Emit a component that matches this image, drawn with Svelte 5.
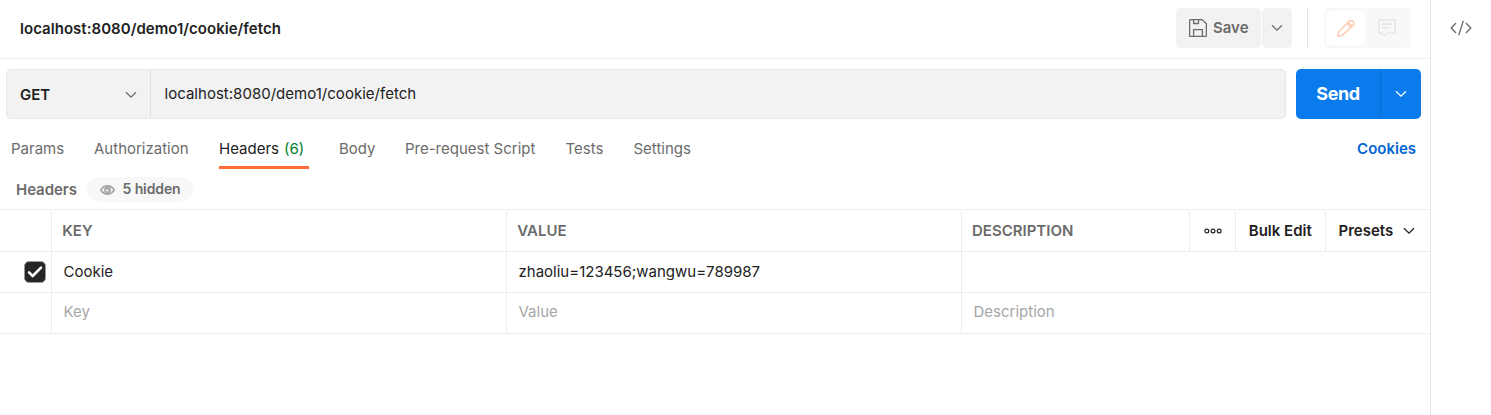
<script>
  const tabs = ['Params', 'Authorization', 'Headers', 'Body', 'Pre-request Script', 'Tests', 'Settings'];
  const count = 6;
  const active = 'Headers';
</script>

{#snippet chevron()}
  <svg class="chevron" width="12" height="8" viewBox="0 0 12 8"><path d="M1 1.2 6 6.2 11 1.2" /></svg>
{/snippet}

<div class="app">
  <main>
    <header>
      <h1>localhost:8080/demo1/cookie/fetch</h1>
      <div class="save">
        <button class="save-main">
          <svg width="18" height="18" viewBox="0 0 18 18" class="line">
            <path d="M1.6.6H13.2L17.4 4.8V16.4a1 1 0 0 1-1 1H1.6a1 1 0 0 1-1-1V1.6a1 1 0 0 1 1-1Z" />
            <path d="M4.6.8V4.5H9.5V.8M4.6 17.2V10.6H13.4V17.2" />
          </svg>
          <span>Save</span>
        </button>
        <button class="save-more">{@render chevron()}</button>
      </div>
      <i class="separator"></i>
      <div class="modes">
        <span class="mode on">
          <svg width="18" height="18" viewBox="0 0 18 18" class="line">
            <path d="M.8 17.2 1.6 13 12.4 2.1a2.9 2.9 0 0 1 4 4L5.2 16.400Z" />
            <path d="M11.200 3.300 14.900 7M10.800 3.700a3.400 3.400 0 0 0 3.700 3.700" />
          </svg>
        </span>
        <span class="mode">
          <svg width="18" height="18" viewBox="0 0 18 18" class="line">
            <path d="M.8 1H17.2V14.2H9.3L6.7 16.8 4.1 14.2H.8ZM4 5.1H14M4 8.7H11" />
          </svg>
        </span>
      </div>
    </header>

    <section class="request">
      <div class="url-box">
        <div class="method"><span>GET</span>{@render chevron()}</div>
        <div class="url">localhost:8080/demo1/cookie/fetch</div>
      </div>
      <div class="send">
        <button class="send-main">Send</button>
        <button class="send-more">{@render chevron()}</button>
      </div>
    </section>

    <nav>
      {#each tabs as tab}
        <div class="tab" class:active={tab === active}>
          <span class="label">{tab}{#if tab === active}<em>({count})</em>{/if}</span>
        </div>
      {/each}
      <a class="cookies">Cookies</a>
    </nav>

    <div class="subhead">
      <span class="subtitle">Headers</span>
      <span class="pill">
        <svg width="15" height="10" viewBox="0 0 15 10">
          <path d="M.8 5C2.5 2.1 4.8.9 7.5.9S12.5 2.1 14.2 5C12.5 7.9 10.2 9.1 7.5 9.1S2.5 7.9.8 5Z" fill="none" stroke="#a6a6a6" stroke-width="1.6" />
          <circle cx="7.5" cy="5" r="2.5" fill="none" stroke="#a6a6a6" stroke-width="1.8" />
          <path d="M7.5 3V5H9.5" fill="none" stroke="#a6a6a6" />
        </svg>
        <b>5 hidden</b>
      </span>
    </div>

    <div class="table">
      <div class="row head">
        <div></div>
        <div class="cell">KEY</div>
        <div class="cell">VALUE</div>
        <div class="cell desc-head">
          <span class="desc">DESCRIPTION</span>
          <span class="tool dots">
            <svg width="18" height="6" viewBox="0 0 18 6"><circle cx="2.8" cy="3" r="1.9" /><circle cx="9" cy="3" r="1.9" /><circle cx="15.2" cy="3" r="1.9" /></svg>
          </span>
          <span class="tool bulk">Bulk Edit</span>
          <span class="tool presets"><span>Presets</span>{@render chevron()}</span>
        </div>
      </div>
      <div class="row">
        <div class="check">
          <span class="box"><svg width="20" height="20" viewBox="0 0 20 20"><path d="M4 10.3 7.7 14 16 5.7" /></svg></span>
        </div>
        <div class="cell">Cookie</div>
        <div class="cell">zhaoliu=123456;wangwu=789987</div>
        <div class="cell"></div>
      </div>
      <div class="row empty">
        <div></div>
        <div class="cell">Key</div>
        <div class="cell">Value</div>
        <div class="cell">Description</div>
      </div>
    </div>
  </main>
  <aside>
    <svg width="22" height="16" viewBox="0 0 22 16" class="line"><path d="M6 3 1.2 8 6 13M16 3 20.8 8 16 13M13.3 .8 8.7 15.2" /></svg>
  </aside>
</div>

<style>
  :global(body) { margin: 0; background: #fff; }
  * { box-sizing: border-box; }
  .app { display: flex; width: 1491px; height: 415px; overflow: hidden; font: 400 15px/20px Inter, sans-serif; color: #212121; }
  svg { display: block; flex: none; }
  button { border: 0; padding: 0; margin: 0; font: inherit; color: inherit; }
  .line { fill: none; stroke: currentColor; stroke-width: 1.3; stroke-linejoin: round; }
  .chevron { fill: none; stroke: currentColor; stroke-width: 1.3; }
  main { width: 1431px; border-right: 1px solid #e6e6e6; }
  header { display: flex; height: 59px; border-bottom: 1px solid #ededed; padding: 8px 19px 0 20px; }
  h1 { margin: 11px auto 0 0; font-size: 15px; line-height: 20px; font-weight: 600; letter-spacing: .04px; white-space: nowrap; }
  .save { display: flex; gap: 1px; height: 40px; color: #6b6b6b; font-weight: 600; }
  .save-main { display: flex; align-items: center; width: 85px; padding-left: 13px; gap: 6px; background: #f2f2f2; border-radius: 5px; }
  .save-more { display: flex; align-items: center; justify-content: center; width: 30px; background: #f2f2f2; border-radius: 5px; }
  .separator { width: 1px; height: 40px; margin: 0 16px 0 15px; background: #e6e6e6; }
  .modes { display: flex; width: 87px; height: 40px; padding: 3px 2px; border-radius: 5px; background: #f8f8f8; color: #e6e6e6; }
  .mode { display: flex; width: 42px; height: 34px; align-items: center; justify-content: center; }
  .mode .line { stroke-width: 1.6; }
  .on { width: 40px; background: #fff; border-radius: 5px; color: #ffcdb9; }
  .request { display: flex; gap: 10px; height: 60px; padding: 10px 9px 0 6px; }
  .url-box { display: flex; width: 1280px; height: 50px; border: 1px solid #e6e6e6; border-radius: 5px; background: #f2f2f2; }
  .method { display: flex; align-items: center; justify-content: space-between; width: 144px; padding: 1px 13px 0; border-right: 1px solid #e1e1e1; font-weight: 600; }
  .method .chevron { color: #6b6b6b; }
  .url { padding: 14px 13.5px; letter-spacing: .02px; }
  .send { display: flex; width: 125px; height: 50px; background: #097bed; color: #fff; border-radius: 5px; }
  .send button { background: none; }
  .send-main { width: 84px; font-size: 18px; font-weight: 700; letter-spacing: -.4px; }
  .send .send-more { display: flex; width: 41px; align-items: center; justify-content: center; border-left: 1px solid #086dd3; }
  nav { display: grid; grid-template-columns: 83px 125px 120px 66px 160.5px 68px 1fr auto; height: 50px; padding: 20px 14px 0 11px; color: #6b6b6b; }
  .tab { white-space: nowrap; }
  .label { display: block; }
  .active .label { width: 90px; height: 30px; border-bottom: 3px solid #ff6c37; color: #212121; }
  em { margin-left: 5px; font-style: normal; color: #007f31; }
  .cookies { color: #0265d2; font-weight: 600; }
  .subhead { display: flex; height: 40px; padding: 8px 0 0 16px; color: #6b6b6b; font-weight: 600; }
  .subtitle { width: 71px; padding-top: 3px; letter-spacing: -.05px; }
  .pill { display: flex; align-items: center; width: 106px; height: 25px; padding-left: 13px; gap: 7.5px; border-radius: 13px; background: #f8f8f8; }
  .pill b { margin-top: -1px; font-size: 14px; font-weight: 600; letter-spacing: -.1px; }
  .table { border-top: 1px solid #ededed; }
  .row { display: grid; grid-template-columns: 51px 455px 455px 1fr; height: 41px; border-bottom: 1px solid #ededed; }
  .cell { padding: 10px 0 0 11.5px; border-left: 1px solid #ededed; white-space: nowrap; }
  .head { height: 42px; padding-top: 1px; font-weight: 600; }
  .head .cell { padding: 10px 0 0 10.3px; color: #6b6b6b; }
  .empty .cell { padding-top: 9px; color: #a6a6a6; }
  .head .desc-head { display: flex; padding: 0 0 0 10px; }
  .desc { width: 217px; padding-top: 10px; }
  .tool { display: flex; align-items: center; border-left: 1px solid #ededed; color: #212121; }
  .dots { width: 46px; padding-left: 14px; }
  .dots circle { fill: none; stroke: #212121; stroke-width: 1.2; }
  .bulk { width: 90px; padding-left: 12.8px; }
  .presets { gap: 9.5px; padding-left: 12.5px; }
  .check { padding: 9px 0 0 24px; }
  .box { display: block; width: 22px; height: 22px; border: 1px solid #999; border-radius: 5px; background: #262626; }
  .box path { fill: none; stroke: #fff; stroke-width: 2.6; stroke-linecap: round; stroke-linejoin: round; }
  aside { width: 60px; padding: 20px 0 0 19px; color: #6b6b6b; }
</style>
